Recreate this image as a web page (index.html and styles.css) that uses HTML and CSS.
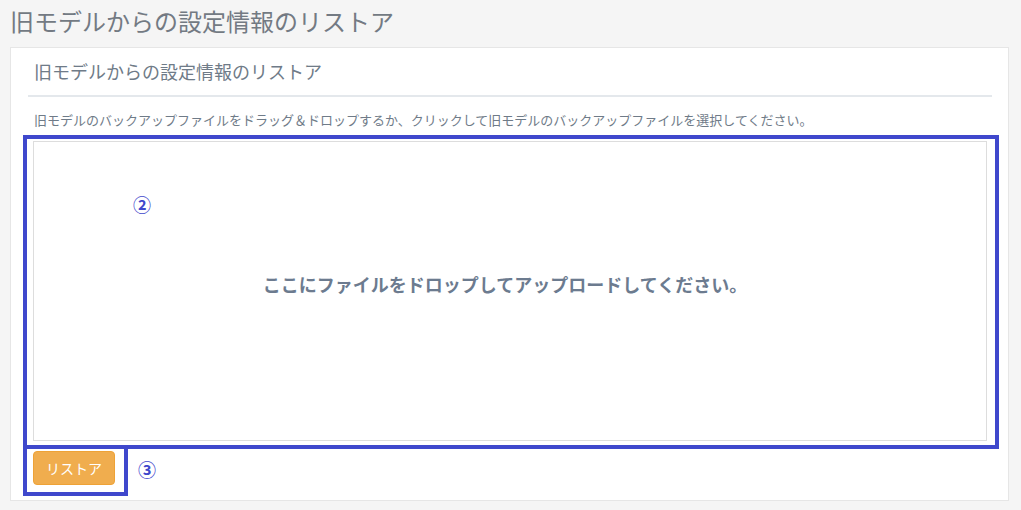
FILE: index.html
```html
<!DOCTYPE html>
<html lang="ja">
  <head>
    <meta charset="UTF-8" />
    <meta name="viewport" content="width=device-width, initial-scale=1.0" />
    <title>旧モデルからの設定情報のリストア</title>
    <link rel="stylesheet" href="styles.css">
  </head>
  <body>
    <div class="page">
      <h1 class="title">旧モデルからの設定情報のリストア</h1>
      <div class="panel">
        <h2 class="panel-head">旧モデルからの設定情報のリストア</h2>
        <hr class="rule" />
        <p class="desc">旧モデルのバックアップファイルをドラッグ＆ドロップするか、クリックして旧モデルのバックアップファイルを選択してください。</p>
        <div class="dropzone">
          <span class="drop-msg">ここにファイルをドロップしてアップロードしてください。</span>
        </div>
        <button type="button" class="btn-restore">リストア</button>

        <div class="mark mark-drop"></div>
        <div class="mark mark-btn"></div>
        <span class="num num-2">②</span>
        <span class="num num-3">③</span>
      </div>
    </div>
  </body>
</html>
```

FILE: styles.css
```css
* {
  margin: 0;
  padding: 0;
  box-sizing: border-box;
}
body {
  background-color: #f5f5f5;
  font-family: "Noto Sans CJK JP", "Noto Sans", sans-serif;
  color: #6f7b88;
}

.page {
  padding: 0 12px 0 10px;
}
.title {
  font-size: 24px;
  font-weight: 400;
  line-height: 36px;
  color: #737a83;
  padding-top: 3px;
}

.panel {
  position: relative;
  margin-top: 8px;
  background-color: #ffffff;
  border: 1px solid #e6e6e6;
  padding: 0 16px 15px 17px;
}
.panel-head {
  font-size: 18px;
  font-weight: 400;
  line-height: 27px;
  padding: 10px 0 0 6px;
  color: #6f7b88;
}
.rule {
  border: none;
  height: 2px;
  background-color: #e4e8ec;
  margin-top: 10px;
}
.desc {
  font-size: 13px;
  line-height: 18px;
  margin-top: 14px;
  padding-left: 6px;
  color: #6f7b88;
}

.dropzone {
  margin: 12px 5px 0 5px;
  height: 300px;
  border: 1px solid #dddddd;
  display: flex;
  align-items: center;
  justify-content: center;
  padding-bottom: 14px;
  padding-right: 10px;
}
.drop-msg {
  font-size: 18px;
  font-weight: 700;
  color: #6c7b8f;
}

.btn-restore {
  display: block;
  margin: 10px 0 0 5px;
  width: 82px;
  height: 34px;
  background-color: #f0ad4e;
  border: 1px solid #eea236;
  border-radius: 4px;
  color: #ffffff;
  font-family: inherit;
  font-size: 14px;
}

/* annotation overlays */
.mark {
  position: absolute;
  border: 4px solid #3f48cc;
}
.mark-drop {
  left: 12px;
  top: 87px;
  width: 976px;
  height: 314px;
}
.mark-btn {
  left: 12px;
  top: 397px;
  width: 105px;
  height: 51px;
}
.num {
  position: absolute;
  font-size: 18px;
  font-weight: 700;
  line-height: 20px;
  color: #3f48cc;
}
.num-2 {
  left: 122px;
  top: 146px;
}
.num-3 {
  left: 127px;
  top: 411px;
}
```
